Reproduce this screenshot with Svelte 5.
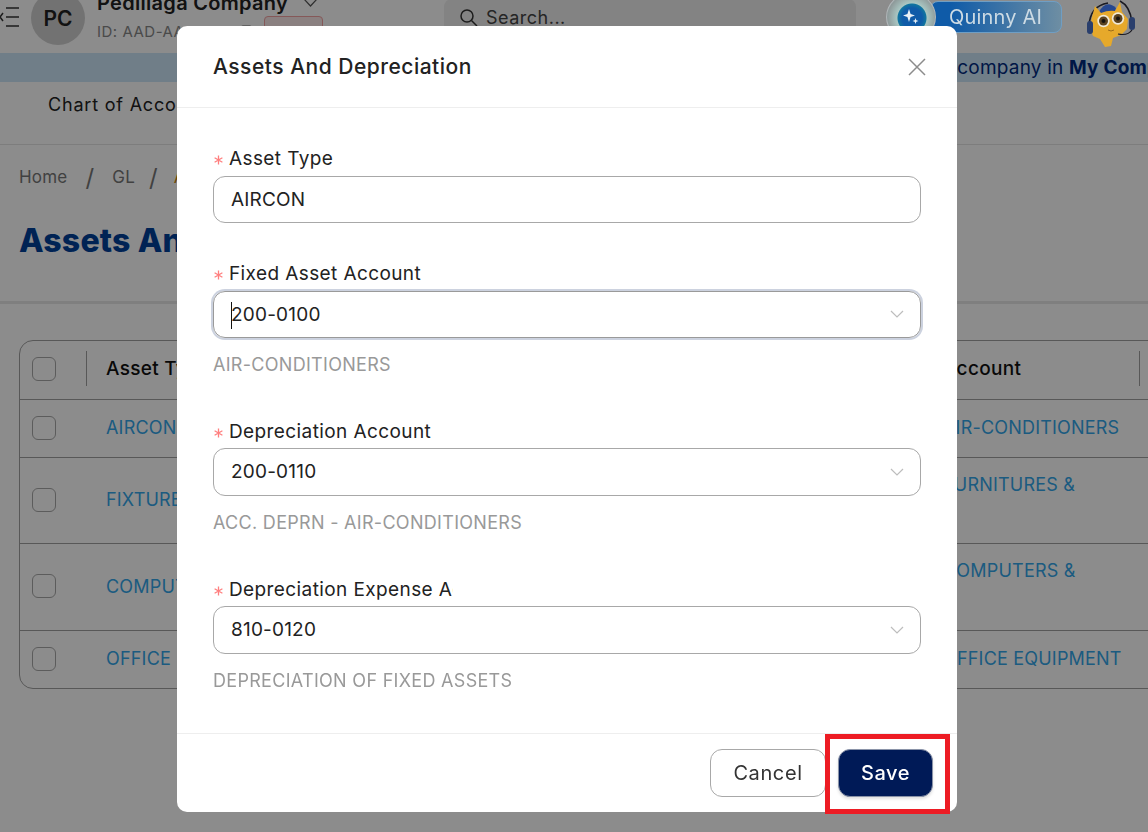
<script lang="ts">
	const rows = [
		{ name: 'AIRCON', account: 'AIR-CONDITIONERS', cls: 'r1' },
		{ name: 'FIXTURES', account: 'FURNITURES &', cls: 'r2' },
		{ name: 'COMPUTERS', account: 'COMPUTERS &', cls: 'r3' },
		{ name: 'OFFICE', account: 'OFFICE EQUIPMENT', cls: 'r4' }
	];

	const fields = [
		{ label: 'Fixed Asset Account', value: '200-0100', help: 'AIR-CONDITIONERS', focused: true },
		{ label: 'Depreciation Account', value: '200-0110', help: 'ACC. DEPRN - AIR-CONDITIONERS', focused: false },
		{ label: 'Depreciation Expense Account', value: '810-0120', help: 'DEPRECIATION OF FIXED ASSETS', focused: false }
	];
</script>

{#snippet star()}
	<svg class="star" width="9" height="10" viewBox="0 0 9 10" stroke="#ff7f7f" stroke-width="1.300">
		<path d="M4.500 .5v9M.6 2.700l7.800 4.600M8.400 2.700L.6 7.300" />
	</svg>
{/snippet}

<div class="page">
	<header class="topbar">
		<svg class="burger" width="20" height="20" viewBox="0 0 20 20" fill="none" stroke="#333" stroke-width="1.500">
			<path d="M6 1h13M6 10h13M6 19h13M3 6l-3 4 3 4" />
		</svg>
		<div class="avatar">PC</div>
		<div class="company">
			<div class="company-name">
				Pedillaga Company
				<svg width="15" height="9" viewBox="0 0 15 9" fill="none" stroke="#555" stroke-width="1.200">
					<path d="M1 1l6.500 7L14 1" />
				</svg>
			</div>
			<div class="company-id">
				ID: AAD-AA1-0FD
				<svg width="11" height="12" viewBox="0 0 11 12" fill="none" stroke="#666" stroke-width="1.200">
					<rect x="1" y="1" width="9" height="10" rx="1" />
				</svg>
			</div>
		</div>
		<div class="tag"></div>
		<div class="search">
			<svg width="19" height="19" viewBox="0 0 19 19" fill="none" stroke="#333" stroke-width="1.500">
				<circle cx="8" cy="8" r="6" />
				<path d="M12.500 12.500l5.500 5.500" />
			</svg>
			<span>Search...</span>
		</div>
		<div class="quinny">
			<span class="quinny-label">Quinny AI</span>
			<span class="orb">
				<svg width="20" height="20" viewBox="0 0 20 20" fill="#e8f0f6">
					<path d="M8 2l1.600 5L14 8.500l-4.400 1.500L8 15l-1.600-5L2 8.500 6.400 7zM14.500 11l.8 2.200L17.500 14l-2.200.8-.8 2.200-.8-2.200-2.200-.8 2.200-.8z" />
				</svg>
			</span>
		</div>
		<svg class="mascot" width="78" height="50" viewBox="0 0 78 50">
			<path d="M19 26Q20 6 38 3M62 22Q60 6 50 1" fill="none" stroke="#1a1a22" stroke-width="1.600" />
			<path d="M29 12Q36-1 46 8l-2 8H30z" fill="#26478f" />
			<path d="M25 6l6 7q7-3 14-2l5-9 2 10 6 7-1 10-6 6-8 3-2 8-6 1-5-8-7-3-3-9 2-10z" fill="#e6a92b" />
			<rect x="17" y="21" width="6" height="13" rx="3" fill="#2a3f6d" />
			<rect x="59" y="17" width="6" height="13" rx="3" fill="#2a3f6d" />
			<path d="M62 30Q58 36 48 34" fill="none" stroke="#1a1a22" stroke-width="1.200" />
			<circle cx="33.500" cy="21" r="6.200" fill="#efe9d8" />
			<circle cx="33.500" cy="21" r="4.500" fill="#5b4320" />
			<circle cx="33.500" cy="21" r="2" fill="#15120e" />
			<circle cx="48" cy="18.500" r="6.200" fill="#efe9d8" />
			<circle cx="48" cy="18.500" r="4.500" fill="#5b4320" />
			<circle cx="48" cy="18.500" r="2" fill="#15120e" />
			<path d="M38 30q3 2 6 0" fill="none" stroke="#9a6b1a" stroke-width="1" />
		</svg>
	</header>

	<div class="banner">
		<span>Update your company in <b>My Company</b></span>
	</div>

	<nav class="tabs"><span>Chart of Accounts</span></nav>

	<div class="crumbs">
		<span>Home</span><i>/</i><span class="gl">GL</span><i>/</i><span class="current">Assets</span>
	</div>

	<h1 class="title">Assets And Depreciation</h1>

	<div class="table">
		<div class="tr head">
			<span class="box"></span>
			<span class="sep"></span>
			<span class="cell-a">Asset Type</span>
			<span class="cell-b">Account</span>
			<span class="sep last"></span>
		</div>
		{#each rows as row}
			<div class="tr {row.cls}">
				<span class="box"></span>
				<span class="cell-a link">{row.name}</span>
				<span class="cell-b link">{row.account}</span>
			</div>
		{/each}
	</div>
</div>

<div class="overlay"></div>

<div class="modal">
	<div class="modal-head">
		<span>Assets And Depreciation</span>
		<svg width="18" height="18" viewBox="0 0 18 18" stroke="#8c8c8c" stroke-width="1.500">
			<path d="M1 1l16 16M17 1L1 17" />
		</svg>
	</div>

	<div class="modal-body">
		<div class="field first">
			<div class="label">{@render star()}Asset Type</div>
			<div class="input">AIRCON</div>
		</div>
		{#each fields as f}
			<div class="field" class:second={f.focused}>
				<div class="label">{@render star()}{f.label}</div>
				<div class="input select" class:focused={f.focused}>
					{#if f.focused}<span class="caret-bar"></span>{/if}
					<span>{f.value}</span>
					<svg width="14" height="8" viewBox="0 0 14 8" fill="none" stroke="#bdbdbd" stroke-width="1.200">
						<path d="M1 1l6 6 6-6" />
					</svg>
				</div>
				<div class="help">{f.help}</div>
			</div>
		{/each}
	</div>

	<div class="modal-foot">
		<button class="btn cancel">Cancel</button>
		<button class="btn save">Save</button>
	</div>
</div>

<div class="highlight"></div>

<style>
	:global(body) {
		margin: 0;
		background: #fff;
		overflow: hidden;
		font-family: Inter, 'Liberation Sans', sans-serif;
	}

	.page {
		height: 832px;
		overflow: hidden;
		color: #222;
	}

	.topbar {
		height: 53px;
		display: flex;
		align-items: flex-start;
	}

	.burger {
		margin-top: 7px;
		flex: none;
	}

	.avatar {
		width: 54px;
		height: 54px;
		border-radius: 50%;
		background: #d0d0d0;
		margin: -9px 0 0 11px;
		display: flex;
		align-items: center;
		justify-content: center;
		font-size: 21px;
		font-weight: 600;
		flex: none;
	}

	.company {
		margin: -9px 0 0 12px;
		width: 167px;
		flex: none;
	}

	.company-name {
		font-size: 20px;
		font-weight: 600;
		line-height: 24px;
		letter-spacing: 0.3px;
		white-space: nowrap;
	}

	.company-name svg {
		margin-left: 10px;
		vertical-align: 3px;
	}

	.company-id {
		font-size: 15px;
		letter-spacing: 0.5px;
		color: #888;
		margin-top: 7px;
		white-space: nowrap;
	}

	.company-id svg {
		margin-left: 8px;
	}

	.tag {
		width: 59px;
		height: 30px;
		margin-top: 16px;
		border: 1px solid #f3a0a0;
		border-radius: 4px;
		background: #fbeaea;
		flex: none;
		box-sizing: border-box;
	}

	.search {
		width: 412px;
		height: 36px;
		margin: -1px 0 0 121px;
		border-radius: 8px;
		background: #eee;
		display: flex;
		align-items: center;
		gap: 8px;
		padding-left: 15px;
		font-size: 18px;
		letter-spacing: 0.5px;
		color: #444;
		flex: none;
		box-sizing: border-box;
	}

	/* these two sit above the dim layer in the reference */
	.quinny {
		width: 176px;
		height: 32px;
		margin: 1px 0 0 30px;
		flex: none;
		display: flex;
		align-items: center;
		justify-content: flex-end;
		position: relative;
		z-index: 2;
	}

	.quinny-label {
		width: 132px;
		height: 32px;
		padding-left: 18px;
		box-sizing: border-box;
		border: 1px solid #6f9ec4;
		border-radius: 8px;
		background: linear-gradient(90deg, #0f5ba8, #0f5ba8 15%, #6e8ea3);
		color: #cddbe4;
		font-size: 20px;
		letter-spacing: 0.2px;
		line-height: 30px;
		white-space: nowrap;
	}

	.orb {
		position: absolute;
		left: 0;
		top: -8px;
		width: 50px;
		height: 48px;
		border-radius: 50%;
		border: 1px solid #b0b6b9;
		background: radial-gradient(circle at 25px 24px, #0f5ba8 0 10px, #11759f 14px, #a9c6c2 15px, #8f9b9b 24px);
		display: flex;
		align-items: center;
		justify-content: center;
		box-sizing: border-box;
	}

	.mascot {
		margin-left: 8px;
		flex: none;
		position: relative;
		z-index: 2;
	}

	.banner {
		height: 29px;
		background: #cde6f8;
		display: flex;
		justify-content: flex-end;
		align-items: center;
		overflow: hidden;
		white-space: nowrap;
		font-size: 19px;
		letter-spacing: 0.2px;
		color: #002a80;
	}

	.banner span {
		margin-right: -46px;
	}

	.tabs {
		height: 63px;
		box-sizing: border-box;
		border-bottom: 1px solid #e4e4e4;
		padding: 11px 0 0 48px;
		font-size: 18px;
		letter-spacing: 0.8px;
		line-height: 24px;
	}

	.crumbs {
		margin: 18px 0 0 19px;
		height: 28px;
		display: flex;
		align-items: center;
		gap: 18px;
		font-size: 17px;
		letter-spacing: 0.2px;
		color: #777;
	}

	.crumbs i {
		font-size: 24px;
		font-style: normal;
	}

	.gl {
		margin-right: -4px;
	}

	.current {
		margin-left: -2px;
		color: #c8860a;
	}

	.title {
		margin: 0;
		height: 113px;
		box-sizing: border-box;
		padding: 31px 0 0 19px;
		border-bottom: 3px solid #e8e8e8;
		font-size: 32px;
		font-weight: 800;
		line-height: 38px;
		letter-spacing: 0.2px;
		color: #00409a;
		white-space: nowrap;
	}

	.table {
		margin: 36px 0 0 19px;
		width: 1200px;
		border: 1px solid #a0a0a0;
		border-radius: 14px;
		box-sizing: border-box;
	}

	.tr {
		display: flex;
		align-items: center;
		border-bottom: 1px solid #a0a0a0;
		box-sizing: border-box;
		padding-bottom: 2px;
		font-size: 18px;
		letter-spacing: 0.2px;
	}

	.tr:last-child {
		border-bottom: none;
	}

	.head {
		height: 59px;
		padding-bottom: 3px;
		color: #111;
		font-weight: 500;
		font-size: 19px;
		letter-spacing: 0.3px;
	}

	.r1 { height: 58px; }
	.r2 { height: 86px; }
	.r3 { height: 87px; }
	.r4 { height: 57px; }

	.box {
		width: 24px;
		height: 24px;
		margin-left: 12px;
		border: 1px solid #a8a8a8;
		border-radius: 6px;
		box-sizing: border-box;
		flex: none;
	}

	.sep {
		width: 1px;
		height: 35px;
		background: #a0a0a0;
		margin-left: 30px;
		flex: none;
	}

	.sep.last {
		margin-left: 0;
	}

	.cell-a {
		width: 837px;
		margin-left: 50px;
		flex: none;
		white-space: nowrap;
	}

	.head .cell-a {
		margin-left: 19px;
	}

	.cell-b {
		width: 196px;
		flex: none;
		white-space: nowrap;
	}

	.r2 .cell-b,
	.r3 .cell-b {
		align-self: flex-start;
		margin-top: 16px;
	}

	.link {
		color: #33a6ea;
	}

	.overlay {
		position: fixed;
		inset: 0;
		z-index: 1;
		background: rgba(0, 0, 0, 0.45);
	}

	.modal {
		position: fixed;
		left: 177px;
		top: 26px;
		z-index: 3;
		width: 780px;
		height: 786px;
		background: #fff;
		border-radius: 10px;
		display: flex;
		flex-direction: column;
		color: #222;
	}

	.modal-head {
		height: 82px;
		box-sizing: border-box;
		border-bottom: 1px solid #eee;
		padding: 0 31px 0 36px;
		display: flex;
		align-items: center;
		justify-content: space-between;
		font-size: 21px;
		letter-spacing: 0.5px;
		font-weight: 500;
	}

	.modal-body {
		flex: 1;
		padding: 0 36px;
	}

	.field {
		padding-top: 43px;
	}

	.field.first {
		padding-top: 39px;
		height: 117px;
		box-sizing: border-box;
	}

	.field.second {
		padding-top: 37px;
	}

	.label {
		height: 24px;
		line-height: 24px;
		font-size: 19px;
		letter-spacing: 0.4px;
		max-width: 240px;
		overflow: hidden;
		white-space: nowrap;
		margin-bottom: 4px;
	}

	.first .label,
	.second .label {
		margin-bottom: 5px;
	}

	.star {
		margin: 0 6px 0 1px;
		vertical-align: 0;
	}

	.input {
		height: 47px;
		box-sizing: border-box;
		border: 1px solid #a8a8a8;
		border-radius: 12px;
		padding: 0 17px 1px;
		display: flex;
		align-items: center;
		justify-content: space-between;
		font-size: 19px;
		letter-spacing: 0.2px;
		position: relative;
	}

	.select {
		height: 48px;
	}

	.select svg {
		margin-right: -1px;
	}

	.focused {
		height: 47px;
		box-shadow: 0 0 0 2px #ccd2df;
		border-color: #9a9a9a;
	}

	.caret-bar {
		position: absolute;
		left: 17px;
		top: 10px;
		width: 1px;
		height: 27px;
		background: #111;
	}

	.help {
		margin-top: 15px;
		height: 24px;
		line-height: 24px;
		font-size: 18px;
		letter-spacing: 0.3px;
		color: #999;
	}

	.modal-foot {
		height: 79px;
		box-sizing: border-box;
		border-top: 1px solid #eee;
		display: flex;
		justify-content: flex-end;
		align-items: flex-start;
		gap: 12px;
		padding: 15px 24px 0 0;
	}

	.btn {
		height: 48px;
		border-radius: 12px;
		font-family: inherit;
		font-size: 20px;
		letter-spacing: 0.6px;
		font-weight: 500;
	}

	.cancel {
		width: 116px;
		background: #fff;
		border: 1px solid #a8a8a8;
		color: #333;
		font-weight: 400;
	}

	.save {
		width: 95px;
		background: #001a57;
		border: 1px solid #8a93a8;
		color: #fff;
		box-shadow: 0 2px 3px rgba(0, 0, 0, 0.12);
	}

	.highlight {
		position: fixed;
		left: 825px;
		top: 734px;
		z-index: 4;
		width: 125px;
		height: 80px;
		box-sizing: border-box;
		border: 5px solid #ed1c24;
	}
</style>
